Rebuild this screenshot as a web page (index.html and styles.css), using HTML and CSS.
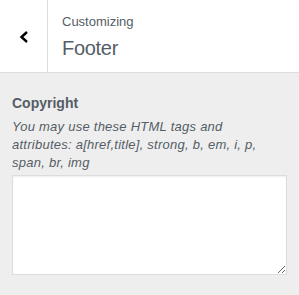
FILE: index.html
```html
<!DOCTYPE html>
<html lang="en">
<head>
  <meta charset="UTF-8">
  <title>Customizing Footer</title>
  <link rel="stylesheet" href="styles.css">
</head>
<body>
  <header class="panel-header">
    <button class="back-btn" aria-label="Back">
      <svg width="12" height="14" viewBox="0 0 12 14"><path d="M9 2 L3.5 7 L9 12" fill="none" stroke="#000" stroke-width="2.4"/></svg>
    </button>
    <div class="panel-title">
      <span class="action">Customizing</span>
      <h2>Footer</h2>
    </div>
  </header>

  <div class="section">
    <label class="control-title" for="copyright">Copyright</label>
    <p class="description">You may use these HTML tags and attributes: a[href,title], strong, b, em, i, p, span, br, img</p>
    <textarea id="copyright"></textarea>
  </div>
</body>
</html>
```

FILE: styles.css
```css
:root {
  --text-color: #555d66;
  --border-color: #ddd;
  --bg-color: #eee;
}

* {
  margin: 0;
  padding: 0;
  box-sizing: border-box;
}

body {
  font-family: "Liberation Sans", Arial, sans-serif;
  background-color: var(--bg-color);
  color: var(--text-color);
}

.panel-header {
  display: flex;
  height: 73px;
  background: white;
  border-bottom: 1px solid var(--border-color);
}

.back-btn {
  width: 48px;
  background: white;
  border: none;
  border-right: 1px solid var(--border-color);
  display: flex;
  align-items: center;
  justify-content: center;
  padding-top: 2px;
}

.panel-title {
  padding: 12px 14px;
  display: flex;
  flex-direction: column;
}

.action {
  font-size: 13px;
  line-height: 20px;
}

.panel-title h2 {
  font-size: 20px;
  font-weight: normal;
  line-height: 28px;
  margin-top: 2px;
  letter-spacing: -0.3px;
}

.section {
  padding: 20px 12px;
}

.control-title {
  display: block;
  font-size: 14px;
  font-weight: bold;
  line-height: 1.5;
  margin-bottom: 4px;
}

.description {
  font-size: 13px;
  font-style: italic;
  line-height: 18px;
  letter-spacing: 0.25px;
  padding-right: 6px;
  margin-bottom: 3px;
}

textarea {
  display: block;
  width: 100%;
  height: 100px;
  border: 1px solid var(--border-color);
  background: white;
  box-shadow: inset 0 1px 2px rgba(0, 0, 0, 0.07);
}
```
